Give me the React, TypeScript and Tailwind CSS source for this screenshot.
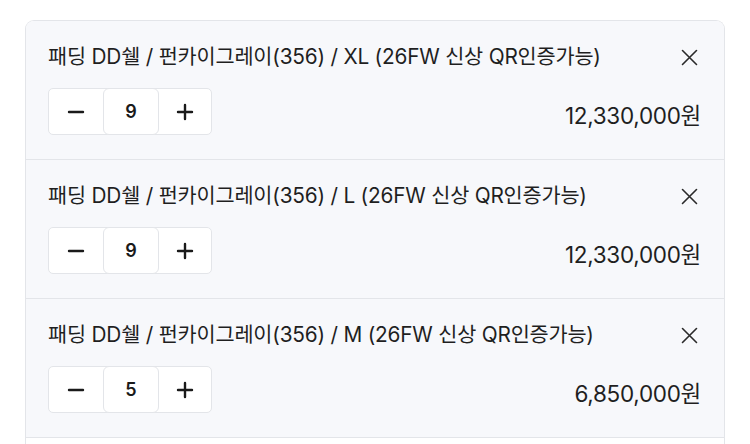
const items = [
  { size: 'XL', qty: 9, price: '12,330,000원' },
  { size: 'L', qty: 9, price: '12,330,000원' },
  { size: 'M', qty: 5, price: '6,850,000원' },
];

function Stepper({ qty }: { qty: number }) {
  return (
    <div className="flex h-[47px] w-[164px] rounded-[5px] border border-[#e3e5e9] bg-white">
      <button className="flex w-[54px] items-center justify-center text-[#1a1a1a]">
        <svg width={18} height={18} viewBox="0 0 18 18" fill="none">
          <path d="M2 9h14" stroke="currentColor" strokeWidth={2.4} strokeLinecap="round" />
        </svg>
      </button>
      <div className="-my-px flex w-[56px] items-center justify-center rounded-[6px] border border-[#e3e5e9] bg-white text-[18px] font-semibold text-[#1a1a1a]">
        {qty}
      </div>
      <button className="flex flex-1 items-center justify-center text-[#1a1a1a]">
        <svg width={18} height={18} viewBox="0 0 18 18" fill="none">
          <path d="M2 9h14M9 2v14" stroke="currentColor" strokeWidth={2.4} strokeLinecap="round" />
        </svg>
      </button>
    </div>
  );
}

export default function App() {
  return (
    <div
      className="min-h-screen bg-white px-[25px] pt-[20px]"
      style={{ fontFamily: "Inter, 'Noto Sans CJK KR', sans-serif" }}
    >
      <div className="overflow-hidden rounded-t-[9px] border border-b-0 border-[#e3e5e9]">
        {items.map((item) => (
          <div
            key={item.size}
            className="border-b border-[#e3e5e9] bg-[#f7f8fb] pb-[24px] pl-[22px] pr-[23px] pt-[24px]"
          >
            <div className="flex items-center justify-between">
              <p className="whitespace-nowrap text-[20.8px] leading-[24px] tracking-[-0.2px] text-[#1f1f1f]">
                패딩 DD쉘 / 펀카이그레이(356) / {item.size} (26FW 신상 QR인증가능)
              </p>
              <button className="mr-[3px] text-[#2a2a2a]">
                <svg width={17} height={17} viewBox="0 0 17 17" fill="none">
                  <path d="M1.5 1.5l14 14M15.5 1.5l-14 14" stroke="currentColor" strokeWidth={1.6} strokeLinecap="round" />
                </svg>
              </button>
            </div>
            <div className="mt-[19px] flex items-center justify-between">
              <Stepper qty={item.qty} />
              <span className="mt-[8px] text-[22.5px] leading-[24px] tracking-[-0.3px] text-[#1f1f1f]">
                {item.price}
              </span>
            </div>
          </div>
        ))}
        <div className="h-[120px] bg-white" />
      </div>
    </div>
  );
}
